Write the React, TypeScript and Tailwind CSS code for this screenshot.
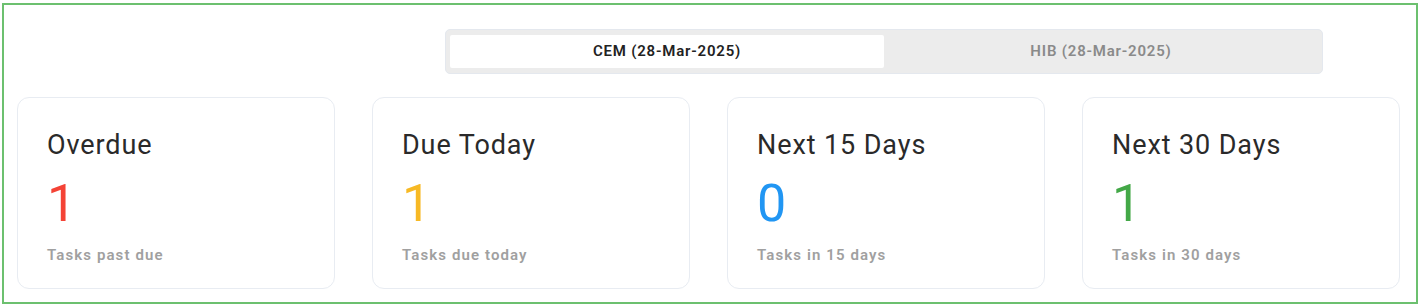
const tabs = [
  { label: 'CEM (28-Mar-2025)', active: true },
  { label: 'HIB (28-Mar-2025)', active: false },
];

const stats = [
  { title: 'Overdue', value: 1, note: 'Tasks past due', color: 'text-[#f44336]' },
  { title: 'Due Today', value: 1, note: 'Tasks due today', color: 'text-[#f7b924]' },
  { title: 'Next 15 Days', value: 0, note: 'Tasks in 15 days', color: 'text-[#2196f3]' },
  { title: 'Next 30 Days', value: 1, note: 'Tasks in 30 days', color: 'text-[#43a847]' },
];

export default function App() {
  return (
    <div className="h-[308px] w-[1423px] bg-white pl-[2px] pt-[3px] font-['Roboto','Liberation_Sans',sans-serif]">
      <div className="flex h-[301px] w-[1416px] flex-col border-2 border-[#6cc06f]">
        {/* Site switcher */}
        <div className="ml-[441px] mt-[24px] flex h-[45px] w-[878px] rounded-[5px] border border-[#e4e8ee] bg-[#ececec] px-[4px] py-[5px]">
          {tabs.map((tab) => (
            <button
              key={tab.label}
              className={
                tab.active
                  ? 'flex flex-1 items-center justify-center rounded-[2px] bg-white text-[15px] font-semibold tracking-[0.8px] text-[#222]'
                  : 'flex flex-1 items-center justify-center text-[15px] font-semibold tracking-[0.8px] text-[#8a8a8a]'
              }
            >
              {tab.label}
            </button>
          ))}
        </div>

        {/* Summary cards */}
        <div className="ml-[13px] mt-[23px] flex gap-[37px]">
          {stats.map((s) => (
            <div
              key={s.title}
              className="h-[192px] w-[318px] rounded-[12px] border border-[#e8ecf2] bg-white pl-[29px] pt-[31px]"
            >
              <div className="text-[27px] leading-[32px] tracking-[0.9px] text-[#2a2a2a]">{s.title}</div>
              <div className={`mt-[17px] text-[52px] leading-[52px] ${s.color}`}>{s.value}</div>
              <div className="mt-[15px] text-[15px] font-semibold leading-[20px] tracking-[1.1px] text-[#a0a0a0]">
                {s.note}
              </div>
            </div>
          ))}
        </div>
      </div>
    </div>
  );
}
